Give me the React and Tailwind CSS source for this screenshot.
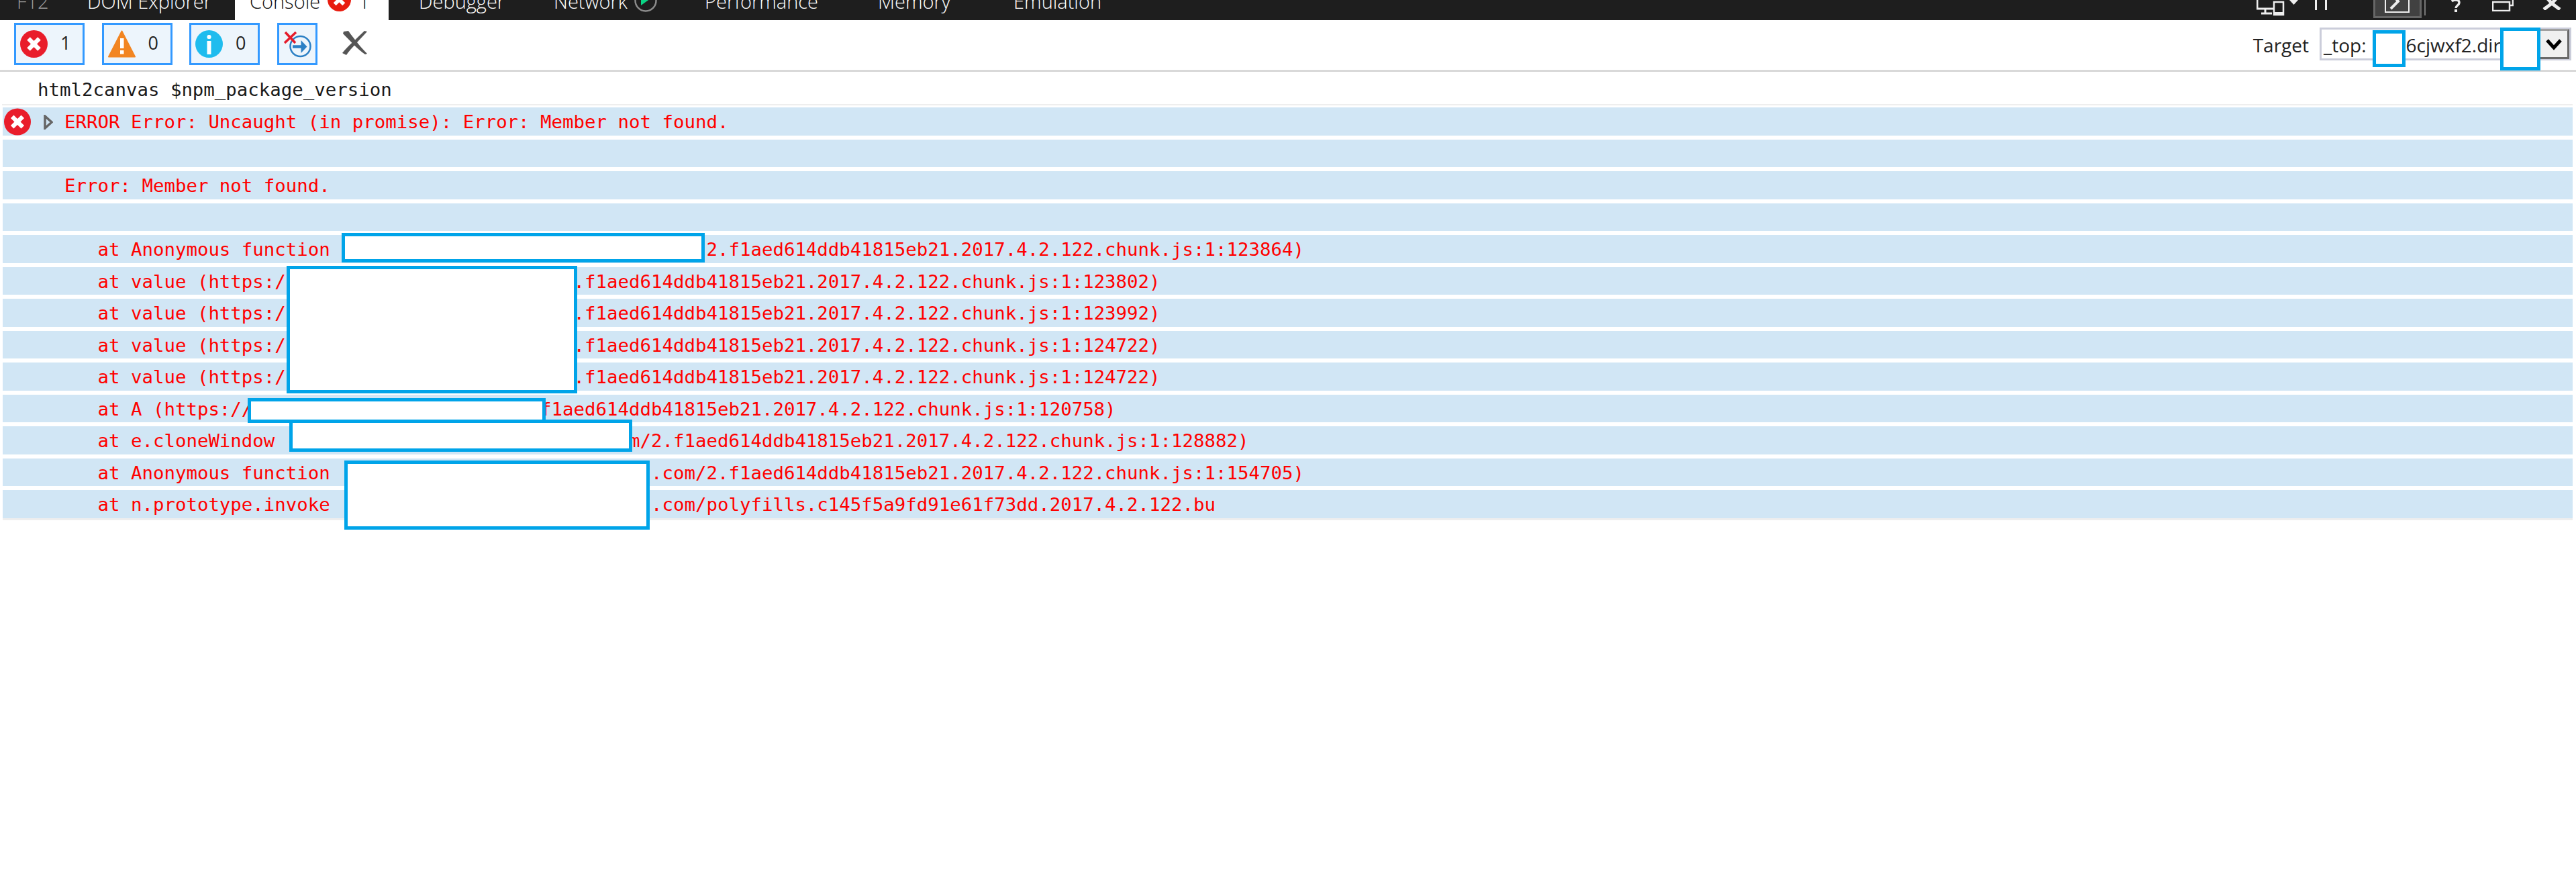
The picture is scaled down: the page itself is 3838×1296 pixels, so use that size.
import React from 'react';

const ErrorIcon = ({ className, fill = '#e91d2b' }) => (
  <svg viewBox="0 0 41 41" className={className}>
    <circle cx="20.5" cy="20.5" r="20.5" fill={fill} />
    <path d="M12.5 12.5 L28.5 28.5 M28.5 12.5 L12.5 28.5" stroke="#fff" strokeWidth="6.5" />
  </svg>
);

const WarningIcon = () => (
  <svg viewBox="0 0 41 41" className="w-[41px] h-[41px] shrink-0">
    <path d="M20.5 1.5 L40 39.5 H1 Z" fill="#f28522" stroke="#f28522" strokeWidth="2" strokeLinejoin="round" />
    <rect x="18" y="12" width="5.5" height="15" fill="#fff" />
    <rect x="18" y="30" width="5.5" height="5.5" fill="#fff" />
  </svg>
);

const InfoIcon = () => (
  <svg viewBox="0 0 41 41" className="w-[41px] h-[41px] shrink-0">
    <circle cx="20.5" cy="20.5" r="20.5" fill="#1fbcee" />
    <rect x="17.5" y="7" width="6" height="6" rx="2.5" fill="#fff" />
    <rect x="17.5" y="16" width="6" height="20" fill="#fff" />
  </svg>
);

const ClearOnNavIcon = () => (
  <svg viewBox="0 0 42 42" className="w-[42px] h-[42px]">
    <circle cx="25.5" cy="24" r="15" fill="none" stroke="#2b7fc4" strokeWidth="2.5" />
    <path d="M14 24.5 H31" stroke="#2b7fc4" strokeWidth="4.5" />
    <path d="M26.5 15 L35.5 24.5 L26.5 34 Z" fill="#2b7fc4" />
    <path d="M3 3 L18 19 M19 3 L2 19" stroke="#e51a2a" strokeWidth="3.5" />
  </svg>
);

const ClearIcon = () => (
  <svg viewBox="0 0 39 36" className="w-[39px] h-[36px] ml-[36px] -mt-[3px]">
    <path d="M3 1 L10 0 C20 14 30 26 38 34 L35 35 C24 28 12 14 2 4 Z" fill="#555" />
    <path d="M34 0 L38 1 C28 12 14 26 7 36 L1 33 C10 22 24 10 34 0 Z" fill="#555" />
  </svg>
);

const FilterButton = ({ icon, count }) => (
  <button className="flex items-center w-[105px] h-[63px] pl-[6px] border-[3px] border-[#3399ff] bg-[#edf5fc] text-[27px] text-[#222]">
    {icon}
    <span className="ml-[19px] -mt-[3px]">{count}</span>
  </button>
);

const tabs = [
  { label: 'F12', w: 'w-[110px]', pl: 'pl-[25px]', color: 'text-[#9a9a9a]' },
  { label: 'DOM Explorer', w: 'w-[240px]', pl: 'pl-[20px]', color: 'text-white' },
  { label: 'Console', w: 'w-[229px]', pl: 'pl-[22px]', color: 'text-[#111]', active: true },
  { label: 'Debugger', w: 'w-[224px]', pl: 'pl-[45px]', color: 'text-white' },
  { label: 'Network', w: 'w-[225px]', pl: 'pl-[22px]', color: 'text-white', network: true },
  { label: 'Performance', w: 'w-[258px]', pl: 'pl-[22px]', color: 'text-white' },
  { label: 'Memory', w: 'w-[200px]', pl: 'pl-[22px]', color: 'text-white' },
  { label: 'Emulation', w: 'w-[200px]', pl: 'pl-[24px]', color: 'text-white' },
];

const TopBar = () => (
  <div className="flex h-[30px] bg-[#1e1e1e] overflow-hidden">
    {tabs.map((t) => (
      <div key={t.label} className={`flex ${t.w} ${t.pl} ${t.color} ${t.active ? 'bg-white' : ''} h-[30px] overflow-hidden`}>
        <span className="text-[29px] leading-[38px] -mt-[17px] whitespace-pre font-light">{t.label}</span>
        {t.active && (
          <>
            <ErrorIcon fill="#e81c0f" className="w-[35px] h-[35px] ml-[11px] -mt-[18px] shrink-0" />
            <span className="text-[29px] leading-[38px] -mt-[17px] ml-[11px] font-light">1</span>
          </>
        )}
        {t.network && (
          <svg viewBox="0 0 34 34" className="w-[34px] h-[34px] ml-[10px] -mt-[16px] shrink-0">
            <circle cx="17" cy="17" r="15.5" fill="none" stroke="#8c8c8c" strokeWidth="2.5" />
            <path d="M10 6 L24 14 L10 24 Z" fill="#0ad484" />
          </svg>
        )}
      </div>
    ))}
    <div className="ml-auto flex items-start h-[30px]">
      <svg viewBox="0 0 66 24" className="w-[66px] h-[24px]">
        <path d="M1 -4 V13 H26 M13 13 V19 M7 20 H23" fill="none" stroke="#eee" strokeWidth="3" />
        <path d="M26 3 H40 V22 H26 Z" fill="#1e1e1e" stroke="#eee" strokeWidth="2.5" />
        <path d="M26 18 H40 V22 H26 Z" fill="#eee" />
        <path d="M49 0 H62 L55.5 7 Z" fill="#eee" />
      </svg>
      <div className="w-[3px] h-[15px] bg-[#eee] ml-[21px]" />
      <div className="w-[3px] h-[15px] bg-[#eee] ml-[12px]" />
      <div className="relative w-[72px] h-[27px] ml-[69px] bg-[#414141] border-x-[3px] border-b-[3px] border-[#666]">
        <svg viewBox="0 0 37 19" className="w-[37px] h-[19px] ml-[14px]">
          <path d="M1 -2 V18 H36 V-2" fill="none" stroke="#eee" strokeWidth="2" />
          <path d="M9 13 L20 2 L14 -5" fill="none" stroke="#eee" strokeWidth="4" />
        </svg>
      </div>
      <div className="w-[2px] h-[23px] bg-[#777] ml-[4px]" />
      <svg viewBox="0 0 14 18" className="w-[14px] h-[18px] ml-[38px]">
        <path d="M1 2 C3 0 12 -2 12 4 C12 8 7 8 7 12" fill="none" stroke="#eee" strokeWidth="3.5" />
        <rect x="5" y="14" width="4" height="4" fill="#eee" />
      </svg>
      <svg viewBox="0 0 32 17" className="w-[32px] h-[17px] ml-[47px]">
        <path d="M1 3 H26 V16 H1 Z M26 8 H31 V-2" fill="none" stroke="#eee" strokeWidth="2.5" />
      </svg>
      <svg viewBox="0 0 30 15" className="w-[30px] h-[15px] ml-[42px] mr-[21px]">
        <path d="M5 -6 L15 5 L25 -6 M15 5 L3 14 M15 5 L27 14" fill="none" stroke="#eee" strokeWidth="5" />
      </svg>
    </div>
  </div>
);

const Toolbar = () => (
  <div className="flex items-center h-[77px] pb-[3px] pl-[21px] pr-[7px] border-b-[3px] border-[#d9d9d9]">
    <div className="flex items-center gap-[25.5px]">
      <FilterButton icon={<ErrorIcon className="w-[41px] h-[41px] shrink-0" />} count="1" />
      <FilterButton icon={<WarningIcon />} count="0" />
      <FilterButton icon={<InfoIcon />} count="0" />
      <button className="flex items-center justify-center w-[60px] h-[63px] border-[3px] border-[#3399ff] bg-[#edf5fc]">
        <ClearOnNavIcon />
      </button>
    </div>
    <ClearIcon />
    <div className="ml-auto flex items-center text-[28px] text-[#222]">
      <span className="pt-[3px]">Target</span>
      <div className="flex items-center w-[375px] h-[49px] ml-[16px] border-[3px] border-[#cbcdda]">
        <div className="flex-1 pl-[3px] pt-[3px] overflow-hidden whitespace-pre leading-[40px]">
          <span>_top:</span>
          <span className="ml-[59px]">6cjwxf2.dir</span>
        </div>
        <div className="flex items-center justify-center w-[43px] h-[45px] shrink-0 bg-[#f0f0f0] border-t-[3px] border-r-[3px] border-b-[3px] border-t-[#a0a0a0] border-r-[#696969] border-b-[#696969]">
          <svg viewBox="0 0 26 18" className="w-[26px] h-[18px]">
            <path d="M3 3 L13 14 L23 3" fill="none" stroke="#000" strokeWidth="5" />
          </svg>
        </div>
      </div>
    </div>
  </div>
);

const Row = ({ children }) => (
  <div className="flex items-center h-[41.5px] pl-[92px] pt-[2px] bg-[#d1e6f5] whitespace-pre">{children}</div>
);

const suffix = 'f1aed614ddb41815eb21.2017.4.2.122.chunk.js:1:';

const Console = () => (
  <div className="pl-[3px] pr-[5px] font-['DejaVu_Sans_Mono',monospace] text-[27.4px] text-[#ff0000]">
    <div className="flex items-center h-[48px] pt-[5px] pl-[53px] text-[#1a1a1a] whitespace-pre">html2canvas $npm_package_version</div>
    <div className="h-[2px] bg-[#eeeeee]" />
    <div className="pt-[3px] pl-[1px] flex flex-col gap-[6px]">
      <Row>
        <div className="flex items-center w-[92px] h-[41px] -ml-[92px] pl-[2px]">
          <ErrorIcon className="w-[40px] h-[41px] shrink-0" />
          <svg viewBox="0 0 14 22" className="w-[14px] h-[22px] ml-[19px]">
            <path d="M2 2 L12 11 L2 20 Z" fill="none" stroke="#666" strokeWidth="3.5" />
          </svg>
        </div>
        ERROR Error: Uncaught (in promise): Error: Member not found.
      </Row>
      <Row />
      <Row>Error: Member not found.</Row>
      <Row />
      <Row>   at Anonymous function<span className="ml-[34ch]">2.{suffix}123864)</span></Row>
      <Row>   at value (https:/<span className="ml-[26ch]">.{suffix}123802)</span></Row>
      <Row>   at value (https:/<span className="ml-[26ch]">.{suffix}123992)</span></Row>
      <Row>   at value (https:/<span className="ml-[26ch]">.{suffix}124722)</span></Row>
      <Row>   at value (https:/<span className="ml-[26ch]">.{suffix}124722)</span></Row>
      <Row>   at A (https://<span className="ml-[26ch]">{suffix}120758)</span></Row>
      <Row>   at e.cloneWindow (<span className="ml-[30ch]">m/2.{suffix}128882)</span></Row>
      <Row>   at Anonymous function (<span className="ml-[27ch]">.com/2.{suffix}154705)</span></Row>
      <Row>   at n.prototype.invoke (<span className="ml-[27ch]">.com/polyfills.c145f5a9fd91e61f73dd.2017.4.2.122.bu</span></Row>
      <div className="h-[3px] -mt-[6px] bg-[#eeeeee]" />
    </div>
  </div>
);

// blue redaction boxes drawn on top of the screenshot
const Redaction = ({ className }) => (
  <div className={`absolute bg-white border-[5px] border-[#00a4e9] ${className}`} />
);

export default function App() {
  return (
    <div className="relative w-[3838px] h-[1296px] bg-white overflow-hidden font-['Open_Sans',sans-serif]">
      <TopBar />
      <Toolbar />
      <Console />
      <Redaction className="left-[3535px] top-[45px] w-[49px] h-[55px]" />
      <Redaction className="left-[3725px] top-[41px] w-[60px] h-[64px]" />
      <Redaction className="left-[509px] top-[347px] w-[541px] h-[44px]" />
      <Redaction className="left-[427px] top-[396px] w-[433px] h-[190px]" />
      <Redaction className="left-[369px] top-[593px] w-[444px] h-[37px]" />
      <Redaction className="left-[431px] top-[625px] w-[511px] h-[48px]" />
      <Redaction className="left-[513px] top-[686px] w-[455px] h-[103px]" />
    </div>
  );
}
